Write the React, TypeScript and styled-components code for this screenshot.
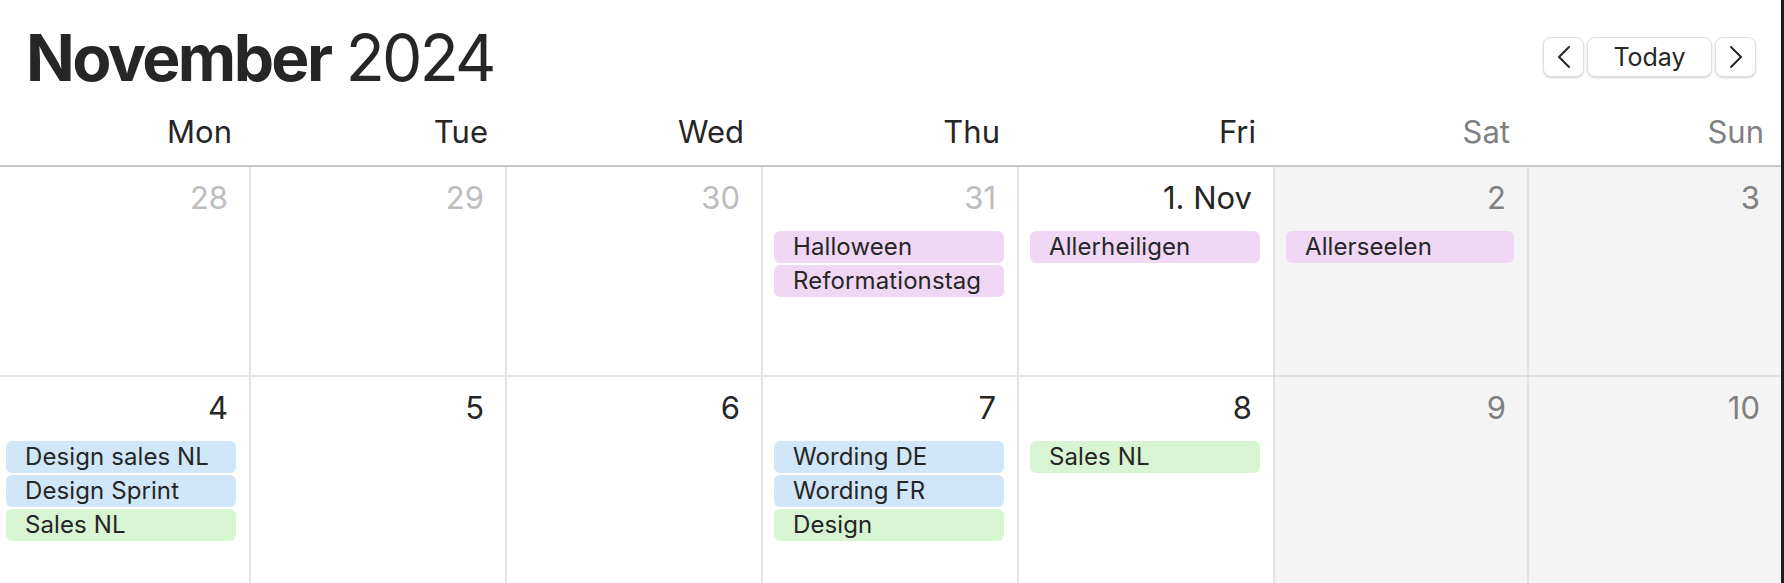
import React from "react";
import styled, { createGlobalStyle } from "styled-components";

type Tone = "purple" | "blue" | "green";
type Kind = "muted" | "normal" | "weekend";

interface CalEvent {
  title: string;
  tone: Tone;
}

interface Day {
  label: string;
  kind: Kind;
  events?: CalEvent[];
}

const GlobalStyle = createGlobalStyle`
  html, body {
    margin: 0;
    padding: 0;
    background: #ffffff;
  }
  body {
    font-family: Inter, "Noto Sans", "Liberation Sans", sans-serif;
    color: #262626;
  }
  *, *::before, *::after {
    box-sizing: border-box;
  }
`;

const Page = styled.div`
  width: 1784px;
  height: 583px;
  overflow: hidden;
  border-right: 3px solid #1e1e1e;
  background: #ffffff;
`;

const Header = styled.div`
  display: flex;
  justify-content: space-between;
  align-items: center;
  padding: 26px 25px 0 26px;
`;

const Title = styled.h1`
  margin: 0;
  font-size: 64px;
  line-height: 64px;
  font-weight: 400;
  color: #262626;
  letter-spacing: -2.7px;

  strong {
    font-weight: 700;
    letter-spacing: -2.6px;
  }
`;

const Nav = styled.div`
  display: flex;
  gap: 3px;
  margin-top: -2px;
`;

const NavButton = styled.button<{ $wide?: boolean }>`
  height: 40px;
  width: ${({ $wide }) => ($wide ? "125px" : "41px")};
  padding: 0;
  display: flex;
  align-items: center;
  justify-content: center;
  background: #ffffff;
  border: 1px solid #e0e0e0;
  border-radius: 8px;
  box-shadow: 0 1px 2px rgba(0, 0, 0, 0.18);
  font-family: Inter, "Liberation Sans", sans-serif;
  font-size: 25px;
  color: #262626;
  cursor: pointer;
`;

const Columns = styled.div`
  display: grid;
  grid-template-columns: repeat(5, 256px) 254px 1fr;
  margin-left: -7px;
`;

const WeekdayRow = styled(Columns)`
  margin-top: 22px;
  padding-bottom: 13px;
  border-bottom: 2px solid #c9c9cc;
`;

const Weekday = styled.div<{ $weekend?: boolean }>`
  text-align: right;
  padding-right: 17px;
  font-size: 31px;
  line-height: 40px;
  color: ${({ $weekend }) => ($weekend ? "#808080" : "#262626")};
`;

const MonthGrid = styled(Columns)`
  grid-template-rows: 208px 210px;
`;

const Cell = styled.div<{ $weekend?: boolean; $lower?: boolean }>`
  border-left: 2px solid #e2e2e2;
  border-top: ${({ $lower }) => ($lower ? "2px solid #e2e2e2" : "none")};
  background: ${({ $weekend }) => ($weekend ? "#f4f4f4" : "#ffffff")};
  padding-top: 11px;
  overflow: hidden;
`;

const DayNumber = styled.div<{ $kind: Kind }>`
  text-align: right;
  padding-right: 21px;
  font-size: 31px;
  line-height: 40px;
  color: ${({ $kind }) =>
    $kind === "muted" ? "#bdbdbd" : $kind === "weekend" ? "#808080" : "#262626"};
`;

const EventList = styled.div`
  display: flex;
  flex-direction: column;
  gap: 2px;
  margin: 13px 13px 0 11px;
`;

const EventPill = styled.div<{ $tone: Tone }>`
  height: 32px;
  line-height: 32px;
  padding-left: 19px;
  border-radius: 6px;
  font-size: 24px;
  letter-spacing: 0.1px;
  color: #262626;
  white-space: nowrap;
  overflow: hidden;
  background: ${({ $tone }) =>
    $tone === "purple" ? "#f0d7f5" : $tone === "blue" ? "#d0e7fa" : "#d7f5d3"};
`;

const Chevron = ({ dir }: { dir: "left" | "right" }) => (
  <svg width="14" height="24" viewBox="0 0 14 24" fill="none">
    <polyline
      points={dir === "left" ? "12,2 2,12 12,22" : "2,2 12,12 2,22"}
      stroke="#262626"
      strokeWidth="2"
      strokeLinecap="round"
      strokeLinejoin="round"
    />
  </svg>
);

const weekdays = ["Mon", "Tue", "Wed", "Thu", "Fri", "Sat", "Sun"];

const days: Day[] = [
  { label: "28", kind: "muted" },
  { label: "29", kind: "muted" },
  { label: "30", kind: "muted" },
  {
    label: "31",
    kind: "muted",
    events: [
      { title: "Halloween", tone: "purple" },
      { title: "Reformationstag", tone: "purple" },
    ],
  },
  { label: "1. Nov", kind: "normal", events: [{ title: "Allerheiligen", tone: "purple" }] },
  { label: "2", kind: "weekend", events: [{ title: "Allerseelen", tone: "purple" }] },
  { label: "3", kind: "weekend" },
  {
    label: "4",
    kind: "normal",
    events: [
      { title: "Design sales NL", tone: "blue" },
      { title: "Design Sprint", tone: "blue" },
      { title: "Sales NL", tone: "green" },
    ],
  },
  { label: "5", kind: "normal" },
  { label: "6", kind: "normal" },
  {
    label: "7",
    kind: "normal",
    events: [
      { title: "Wording DE", tone: "blue" },
      { title: "Wording FR", tone: "blue" },
      { title: "Design", tone: "green" },
    ],
  },
  { label: "8", kind: "normal", events: [{ title: "Sales NL", tone: "green" }] },
  { label: "9", kind: "weekend" },
  { label: "10", kind: "weekend" },
];

export default function App() {
  return (
    <Page>
      <GlobalStyle />
      <Header>
        <Title>
          <strong>November</strong> 2024
        </Title>
        <Nav>
          <NavButton aria-label="Previous month">
            <Chevron dir="left" />
          </NavButton>
          <NavButton $wide>Today</NavButton>
          <NavButton aria-label="Next month">
            <Chevron dir="right" />
          </NavButton>
        </Nav>
      </Header>

      <WeekdayRow>
        {weekdays.map((d, i) => (
          <Weekday key={d} $weekend={i >= 5}>
            {d}
          </Weekday>
        ))}
      </WeekdayRow>

      <MonthGrid>
        {days.map((day, i) => (
          <Cell key={i} $weekend={i % 7 >= 5} $lower={i >= 7}>
            <DayNumber $kind={day.kind}>{day.label}</DayNumber>
            {day.events && (
              <EventList>
                {day.events.map((ev) => (
                  <EventPill key={ev.title} $tone={ev.tone}>
                    {ev.title}
                  </EventPill>
                ))}
              </EventList>
            )}
          </Cell>
        ))}
      </MonthGrid>
    </Page>
  );
}
